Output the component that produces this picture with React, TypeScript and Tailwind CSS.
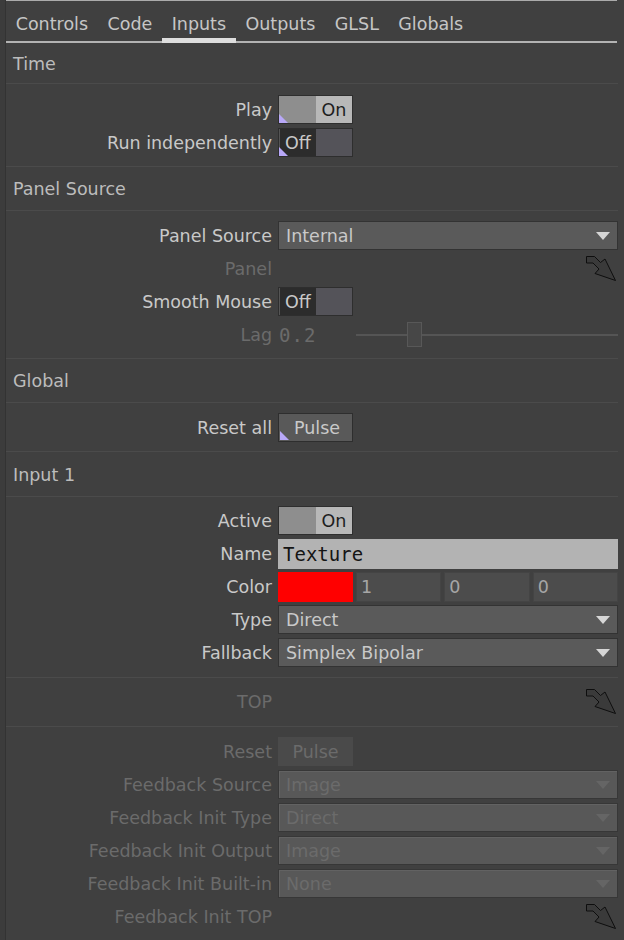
import type {ReactNode} from "react";

const tabs = ["Controls", "Code", "Inputs", "Outputs", "GLSL", "Globals"];

function Line() {
    return <div className="h-px bg-[#4b4b4b]" />;
}

function Header({title, h}: {title: string; h: string}) {
    return (
        <div className={`${h} flex items-center px-[7px] pt-[3px] text-[#bcbcbc]`}>{title}</div>
    );
}

function Row({label, dim, children}: {label: string; dim?: boolean; children?: ReactNode}) {
    return (
        <div className="h-[33px] flex items-center gap-[6px]">
            <div className={`w-[266px] text-right pt-[2px] ${dim ? "text-[#6b6b6b]" : "text-[#c9c9c9]"}`}>{label}</div>
            <div className="flex-1 flex items-center">{children}</div>
        </div>
    );
}

function Corner() {
    return (
        <svg className="absolute left-[1px] bottom-[1px]" width="9" height="9" viewBox="0 0 9 9">
            <path d="M0 0 L9 9 L0 9 Z" fill="#b8a8f8" />
        </svg>
    );
}

function Toggle({on}: {on: boolean}) {
    return (
        <div className="relative w-[75px] h-[29px] border border-[#2e2e2e] flex">
            {on ? (
                <>
                    <div className="w-[37px] bg-[#8e8e8e]" />
                    <div className="flex-1 bg-[#b8b8b8] text-[#1e1e1e] flex items-center justify-center pt-[2px]">On</div>
                </>
            ) : (
                <>
                    <div className="w-[37px] bg-[#2c2c2c] border-l border-[#555] text-[#c9c9c9] flex items-center justify-center pt-[2px]">
                        Off
                    </div>
                    <div className="flex-1 bg-[#545359]" />
                </>
            )}
        </div>
    );
}

function OnOff({on, corner}: {on: boolean; corner?: boolean}) {
    return (
        <div className="relative">
            <Toggle on={on} />
            {corner && <Corner />}
        </div>
    );
}

function Pulse({dim}: {dim?: boolean}) {
    if (dim) {
        return (
            <div className="w-[75px] h-[29px] bg-[#4a4a4a] text-[#6b6b6b] flex items-center justify-center pt-[2px]">Pulse</div>
        );
    }
    return (
        <div className="relative w-[75px] h-[29px] bg-[#595959] border border-[#2e2e2e] text-[#c9c9c9] flex items-center justify-center pt-[2px]">
            <span className="pl-[3px]">Pulse</span>
            <Corner />
        </div>
    );
}

function Menu({value, dim}: {value: string; dim?: boolean}) {
    return (
        <div
            className={`flex-1 h-[29px] flex items-center justify-between px-[7px] border ${
                dim
                    ? "bg-[#585858] border-[#373737] text-[#6b6b6b] shadow-[inset_1px_1px_0_#626262]"
                    : "bg-[#5a5a5a] border-[#333333] text-[#c9c9c9]"
            }`}
        >
            <span className="pt-[2px]">{value}</span>
            <svg width="14" height="8" viewBox="0 0 14 8">
                <path d="M0 0 H14 L7 8 Z" fill={dim ? "#656565" : "#d6d6d6"} />
            </svg>
        </div>
    );
}

function Jump() {
    return (
        <div className="flex-1 flex justify-end pr-[1px]">
            <svg width="31" height="26" viewBox="0 0 31 26">
                <path
                    d="M0.5 0.5 H8.5 L14.5 6.5 L19 3 L29.5 24.5 L9 17.5 L13 13 L7 7 H0.5 Z"
                    fill="#3a3a3a"
                    stroke="#0e0e0e"
                    strokeWidth="1"
                    strokeLinejoin="miter"
                />
            </svg>
        </div>
    );
}

export default function App() {
    return (
        <div className="w-[624px] h-[940px] bg-[#404040] flex overflow-hidden font-['DejaVu_Sans',sans-serif] text-[17.5px] leading-none">
            <div className="w-[6px] bg-[#3c3c3c] border-r border-[#333333]" />
            <div className="flex-1 pr-[6px] flex flex-col">
                <div className="h-px bg-[#ababab] mr-[1px]" />

                {/* Tabs */}
                <div className="h-[42px] flex items-stretch border-b-2 border-[#b3b3b3] mr-[1px]">
                    {tabs.map((t) => (
                        <div
                            key={t}
                            className={`px-[9.7px] pt-[10px] flex items-center text-[#c6c6c6] -mb-[2px] border-b-[5px] ${
                                t === "Inputs" ? "border-[#dedede]" : "border-transparent"
                            }`}
                        >
                            {t}
                        </div>
                    ))}
                </div>

                <Header title="Time" h="h-[40px]" />
                <Line />
                <div className="pt-[9px] pb-[7px]">
                    <Row label="Play">
                        <OnOff on corner />
                    </Row>
                    <Row label="Run independently">
                        <OnOff on={false} corner />
                    </Row>
                </div>
                <Line />

                <Header title="Panel Source" h="h-[43px]" />
                <Line />
                <div className="pt-[8px] pb-[7px]">
                    <Row label="Panel Source">
                        <Menu value="Internal" />
                    </Row>
                    <Row label="Panel" dim>
                        <Jump />
                    </Row>
                    <Row label="Smooth Mouse">
                        <OnOff on={false} />
                    </Row>
                    <Row label="Lag" dim>
                        <div className="w-[78px] font-['DejaVu_Sans_Mono',monospace] text-[19px] tracking-[1px] text-[#6b6b6b] pl-px pt-[2px]">0.2</div>
                        <div className="relative flex-1 h-[25px] flex items-center">
                            <div className="flex-1 h-[2px] bg-[#555555]" />
                            <div className="absolute left-[51px] top-0 w-[15px] h-[25px] bg-[#474747] border border-[#585858]" />
                        </div>
                    </Row>
                </div>
                <Line />

                <Header title="Global" h="h-[43px]" />
                <Line />
                <div className="pt-[8px] pb-[7px]">
                    <Row label="Reset all">
                        <Pulse />
                    </Row>
                </div>
                <Line />

                <Header title="Input 1" h="h-[44px]" />
                <Line />
                <div className="pt-[7px] pb-[8px]">
                    <Row label="Active">
                        <OnOff on />
                    </Row>
                    <Row label="Name">
                        <div className="flex-1 h-[30px] bg-[#b3b3b3] text-[#151515] font-['DejaVu_Sans_Mono',monospace] text-[19px] flex items-center px-[5px] pt-[2px]">
                            Texture
                        </div>
                    </Row>
                    <Row label="Color">
                        <div className="flex-1 flex gap-[3px] h-[30px]">
                            <div className="w-[75px] bg-[#ff0000]" />
                            <div className="flex-1 bg-[#4c4c4c] border border-[#444] text-[#a6a6a6] flex items-center px-[4px] pt-[2px]">1</div>
                            <div className="flex-1 bg-[#4c4c4c] border border-[#444] text-[#a6a6a6] flex items-center px-[4px] pt-[2px]">0</div>
                            <div className="flex-1 bg-[#4c4c4c] border border-[#444] text-[#a6a6a6] flex items-center px-[4px] pt-[2px]">0</div>
                        </div>
                    </Row>
                    <Row label="Type">
                        <Menu value="Direct" />
                    </Row>
                    <Row label="Fallback">
                        <Menu value="Simplex Bipolar" />
                    </Row>
                </div>
                <Line />

                <div className="pt-[7px] pb-[8px]">
                    <Row label="TOP" dim>
                        <Jump />
                    </Row>
                </div>
                <Line />

                <div className="pt-[8px]">
                    <Row label="Reset" dim>
                        <Pulse dim />
                    </Row>
                    <Row label="Feedback Source" dim>
                        <Menu value="Image" dim />
                    </Row>
                    <Row label="Feedback Init Type" dim>
                        <Menu value="Direct" dim />
                    </Row>
                    <Row label="Feedback Init Output" dim>
                        <Menu value="Image" dim />
                    </Row>
                    <Row label="Feedback Init Built-in" dim>
                        <Menu value="None" dim />
                    </Row>
                    <Row label="Feedback Init TOP" dim>
                        <Jump />
                    </Row>
                </div>
            </div>
        </div>
    );
}
